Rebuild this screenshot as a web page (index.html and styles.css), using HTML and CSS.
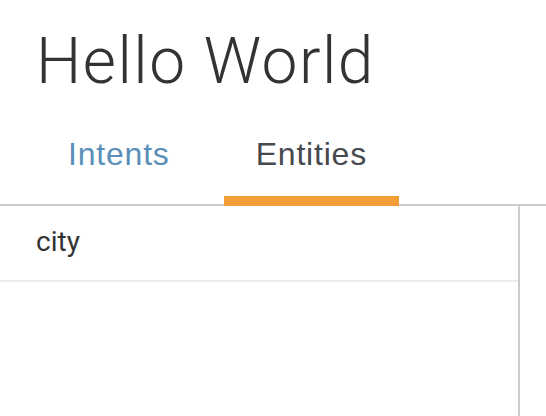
FILE: index.html
```html
<!DOCTYPE html>
<html>
<head>
<meta charset="utf-8">
<link rel="stylesheet" href="styles.css">
</head>
<body>
<div class="page">
  <h1 class="title">Hello World</h1>
  <nav class="tabs">
    <a class="tab">Intents</a>
    <a class="tab active">Entities</a>
  </nav>
  <div class="main">
    <div class="list">
      <div class="row">city</div>
    </div>
    <div class="side"></div>
  </div>
</div>
</body>
</html>
```
FILE: styles.css
```css
html, body {
  margin: 0;
  padding: 0;
  background: #fff;
  height: 100%;
  overflow: hidden;
}
.page {
  display: flex;
  flex-direction: column;
  height: 100%;
}
.title {
  margin: 30px 0 0;
  padding-left: 36px;
  font-family: Roboto, "Liberation Sans", sans-serif;
  font-weight: 300;
  font-size: 64px;
  line-height: 64px;
  letter-spacing: 1.5px;
  color: #333333;
}
.tabs {
  display: flex;
  gap: 22px;
  margin-top: 24px;
  padding-left: 36px;
  border-bottom: 2px solid #cccccc;
}
.tab {
  padding: 20px 32px 0;
  height: 58px;
  box-sizing: content-box;
  margin-bottom: -2px;
  border-bottom: 10px solid transparent;
  font-family: "Liberation Sans", Arial, sans-serif;
  font-size: 32px;
  line-height: 32px;
  letter-spacing: 0.8px;
  color: #5a8fb9;
}
.tab.active {
  color: #47494e;
  border-bottom-color: #f49c36;
}
.main {
  flex: 1;
  display: flex;
}
.list {
  width: 518px;
  border-right: 2px solid #cccccc;
}
.row {
  padding: 22px 36px 24px;
  font-family: Roboto, "Liberation Sans", sans-serif;
  font-size: 28px;
  line-height: 28px;
  color: #333333;
  border-bottom: 2px solid #ececec;
}
.side {
  flex: 1;
}
```
